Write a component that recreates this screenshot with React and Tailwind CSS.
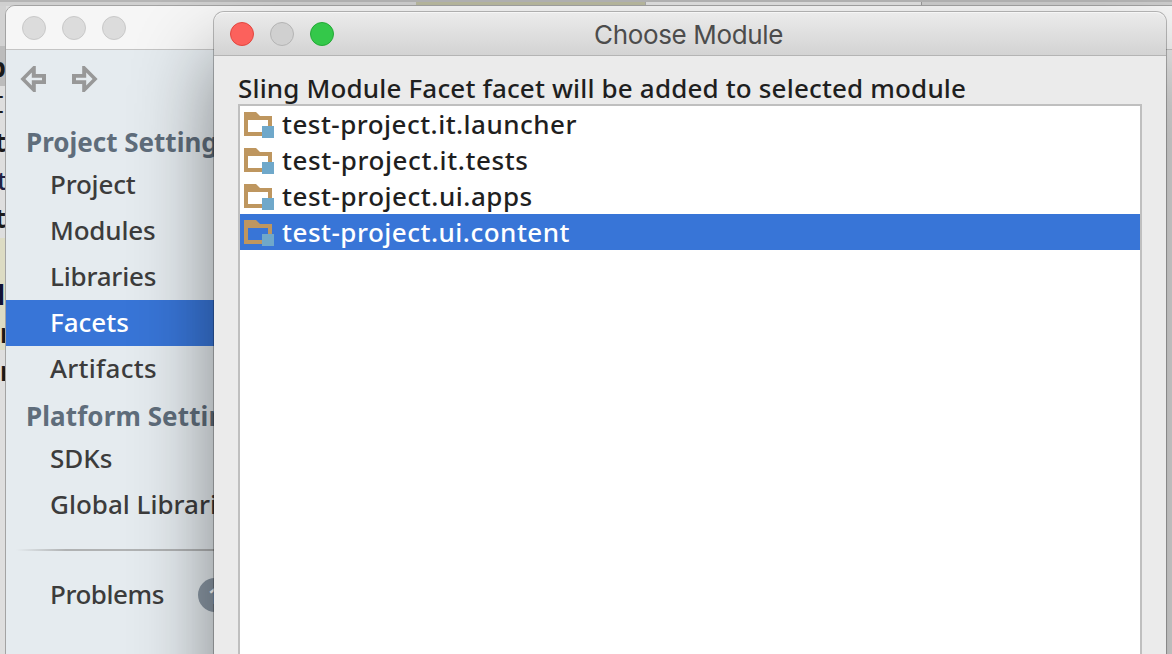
const modules = [
  { name: "test-project.it.launcher", cls: "tracking-[0.47px]" },
  { name: "test-project.it.tests", cls: "tracking-[0.58px]" },
  { name: "test-project.ui.apps", cls: "tracking-[0.53px]" },
  { name: "test-project.ui.content", cls: "tracking-[0.5px]", selected: true },
];

function FolderIcon() {
  return (
    <svg className="mt-[2px] h-7 w-8 shrink-0" viewBox="0 0 32 28">
      <path d="M0 1H12L16 5H28V25H0ZM4 9V21H24V9Z" fill="#be965f" fillRule="evenodd" />
      <rect x="18" y="15" width="12" height="12" fill="#6fa8ca" />
    </svg>
  );
}

function Arrow({ flip }) {
  return (
    <svg className="h-[27px] w-[27px]" viewBox="0 0 27 27">
      <g transform={flip ? "translate(27 0) scale(-1 1)" : undefined}>
        <path
          d="M0.4 13L13.3 0H15.8V8H26V18H15.8V26H13.3ZM5.4 13L11.8 19.4V14.2H22V11.8H11.8V6.6Z"
          fill="#989898"
          fillRule="evenodd"
        />
      </g>
    </svg>
  );
}

function Dot({ color }) {
  return <span className={"size-6 rounded-full border " + color} />;
}

function Item({ label, selected, cls = "tracking-[-0.2px]" }) {
  return (
    <div
      className={
        "flex h-[46px] shrink-0 items-center pb-[2px] pl-[44px] text-[26px] font-medium whitespace-nowrap " +
        (selected ? "bg-[#3875d7] text-white " : "text-[#3c3c3c] ") +
        cls
      }
    >
      {label}
    </div>
  );
}

function Backdrop() {
  return (
    <div className="flex h-[654px] w-[1172px] flex-col bg-[#dedede]">
      <div className="h-[2px] shrink-0 bg-[#b5b5b5]" />
      <div className="flex h-[4px] shrink-0">
        <div className="w-[416px] bg-[#d0d0d0]" />
        <div className="w-[229px] bg-[#babaa0]" />
        <div className="w-[276px] border-l border-[#aaa] bg-[#e0e0e0]" />
        <div className="flex-1 border-l border-[#999] bg-[#cdcdcd]" />
      </div>
      <div className="h-[40px] w-[6px] bg-[#d2d2d2]" />
      <div className="h-[40px] w-[6px] bg-[#bcbcbc]" />
      <div className="h-[152px] w-[6px]" />
      <div className="h-[112px] w-[6px] bg-[#dddcc4]" />
    </div>
  );
}

const fragments = [
  { t: "p", cls: "right-[0px] top-[52px] font-bold" },
  { t: "I'", cls: "right-[-15px] top-[91px] font-['Liberation_Mono',monospace]" },
  { t: "t", cls: "right-[0px] top-[127px] font-bold" },
  { t: "st", cls: "right-[-1px] top-[165px] font-medium text-[#222244]" },
  { t: "t", cls: "right-[0px] top-[203px] font-bold" },
  { t: "l", cls: "right-[1px] top-[280px] font-bold text-[#111133]" },
  { t: "r", cls: "left-0 top-[318px] font-bold" },
  { t: "r", cls: "left-0 top-[356px] font-bold" },
];

export default function App() {
  return (
    <div className="relative h-[654px] w-[1172px] overflow-hidden font-['Noto_Sans',sans-serif]">
      <Backdrop />
      <div className="absolute top-0 left-0 h-full w-[6px] overflow-hidden">
        {fragments.map((f, i) => (
          <span key={i} className={"absolute text-[26px] leading-[30px] text-[#1a1a1a] " + f.cls}>
            {f.t}
          </span>
        ))}
      </div>

      <section className="absolute top-[5px] left-[5px] flex h-[670px] w-[1200px] flex-col overflow-hidden rounded-tl-[10px] border border-[#a3a3a3] bg-[#ebebeb]">
        <header className="flex h-[44px] shrink-0 items-center gap-4 border-b border-[#c4c4c4] bg-[#f6f6f6] pl-4">
          <Dot color="border-[#c9c9c9] bg-[#dcdcdc]" />
          <Dot color="border-[#c9c9c9] bg-[#dcdcdc]" />
          <Dot color="border-[#c9c9c9] bg-[#dcdcdc]" />
        </header>
        <nav className="flex w-[300px] flex-1 flex-col bg-[#e5ebef]">
          <div className="flex h-[70px] shrink-0 items-start gap-6 pt-[16px] pl-[14px]">
            <Arrow />
            <Arrow flip />
          </div>
          <h2 className="flex h-[42px] shrink-0 items-center pt-[2px] pl-[20px] text-[26px] font-bold whitespace-nowrap text-[#5f6d7b]">
            Project Settings
          </h2>
          <Item label="Project" />
          <Item label="Modules" />
          <Item label="Libraries" />
          <Item label="Facets" selected cls="tracking-normal" />
          <Item label="Artifacts" cls="tracking-[0.25px]" />
          <h2 className="flex h-[44px] shrink-0 items-center pt-[4px] pl-[20px] text-[26px] font-bold tracking-[0.1px] whitespace-nowrap text-[#5f6d7b]">
            Platform Settings
          </h2>
          <Item label="SDKs" cls="tracking-normal" />
          <Item label="Global Libraries" cls="tracking-normal" />
          <div className="mt-[21px] mb-[21px] ml-[10px] h-[2px] shrink-0 bg-linear-to-r from-transparent to-[#b0b2b3] to-[50px]" />
          <div className="flex items-center">
            <Item label="Problems" cls="tracking-[-0.45px]" />
            <span className="ml-[34px] flex h-[34px] w-[40px] items-center rounded-full bg-[#8b98a5] pl-[10px] text-[22px] font-semibold text-white">
              1
            </span>
          </div>
        </nav>
      </section>

      <section className="absolute top-[12px] left-[214px] flex h-[800px] w-[952px] flex-col rounded-t-[10px] bg-[#ebebeb] shadow-[0_0_0_1px_rgba(0,0,0,0.25),0_45px_80px_rgba(0,0,0,0.45)]">
        <header className="grid h-[44px] shrink-0 grid-cols-[1fr_auto_1fr] items-center rounded-t-[10px] border-t border-b border-t-[#f6f6f6] border-b-[#b4b4b4] bg-linear-to-b from-[#ebebeb] to-[#d3d3d3] pr-[19px] pl-4">
          <div className="flex gap-4">
            <Dot color="border-[#e2463f] bg-[#fc615c]" />
            <Dot color="border-[#b4b4b4] bg-[#d0d0d0]" />
            <Dot color="border-[#24a936] bg-[#34c84a]" />
          </div>
          <h1 className="font-['Inter',sans-serif] text-[26px] tracking-[-0.35px] text-[#4c4c4c]">Choose Module</h1>
        </header>
        <div className="flex flex-1 flex-col px-[24px] pt-[14px]">
          <p className="h-[34px] text-[26px] leading-[36px] font-medium tracking-[0.16px] whitespace-nowrap text-[#1f1f1f]">
            Sling Module Facet facet will be added to selected module
          </p>
          <ul className="flex-1 border-2 border-[#bfbfbf] bg-white">
            {modules.map((m) => (
              <li
                key={m.name}
                className={
                  "flex h-[36px] items-center gap-[6px] pl-[4px] text-[26px] font-medium " +
                  (m.selected ? "bg-[#3875d7] text-white " : "text-[#1f1f1f] ") +
                  m.cls
                }
              >
                <FolderIcon />
                {m.name}
              </li>
            ))}
          </ul>
        </div>
      </section>
    </div>
  );
}
